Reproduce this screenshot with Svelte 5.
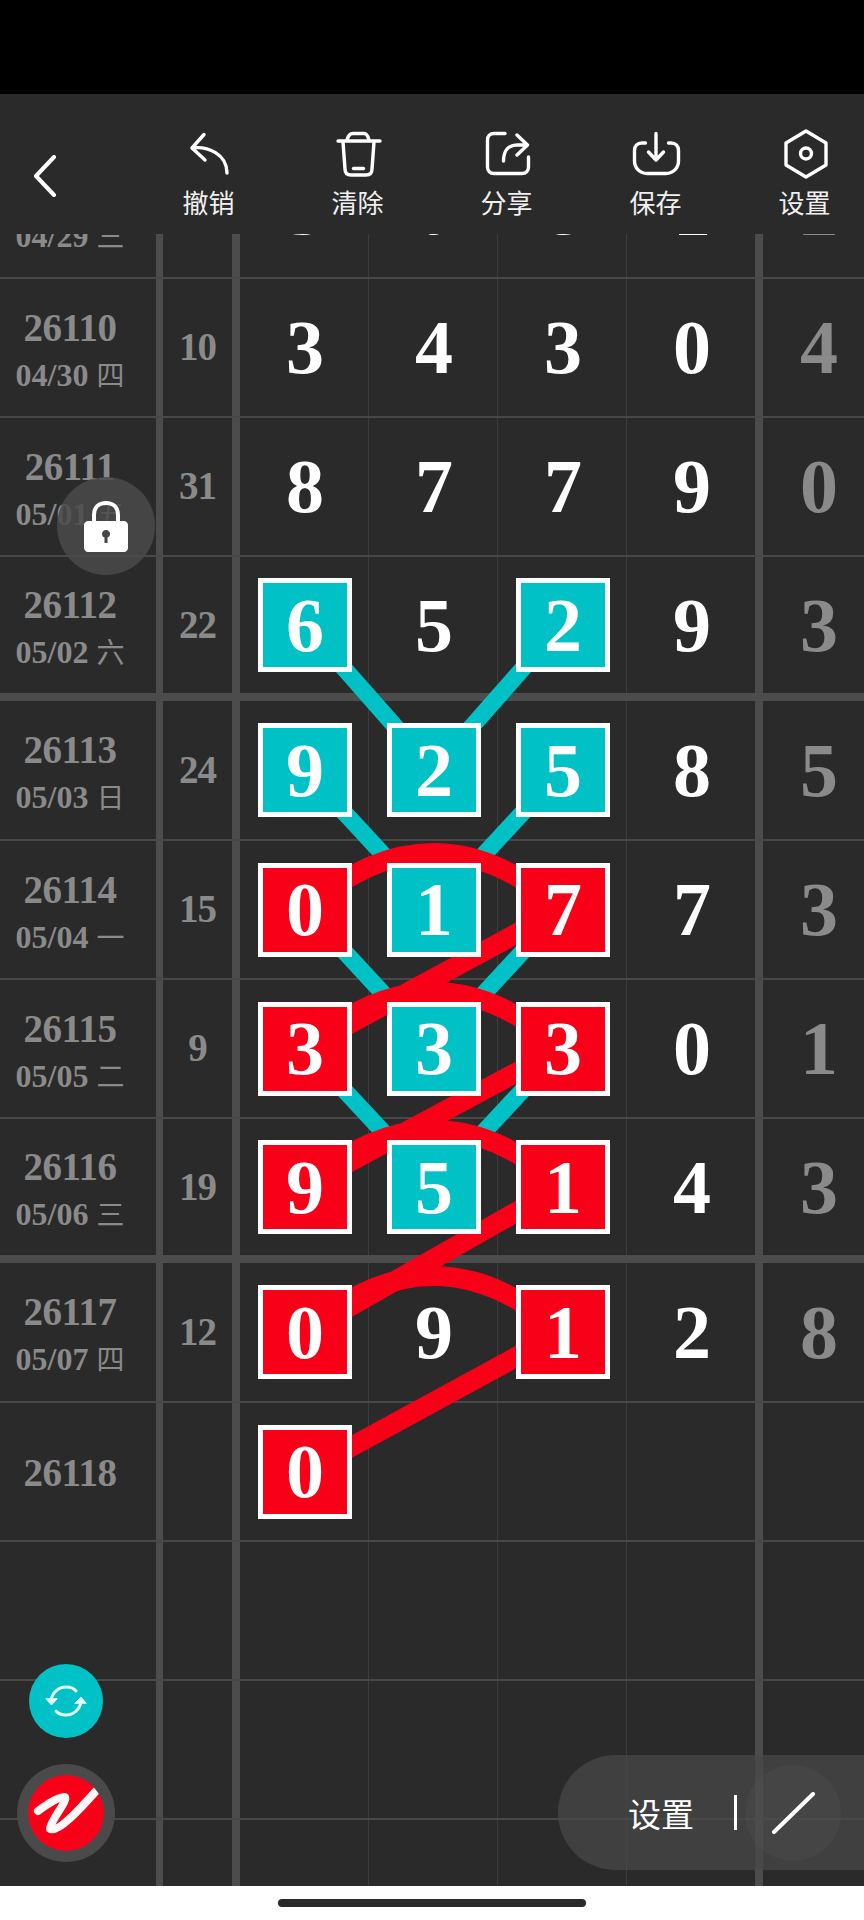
<script>
	const rows = [
		{ no: '26109', date: '04/29', week: '三', sum: '25', nums: ['3', '0', '8', '1', '2'], kind: 'normal peek' },
		{ no: '26110', date: '04/30', week: '四', sum: '10', nums: ['3', '4', '3', '0', '4'], kind: 'normal' },
		{ no: '26111', date: '05/01', week: '五', sum: '31', nums: ['8', '7', '7', '9', '0'], kind: 'normal' },
		{ no: '26112', date: '05/02', week: '六', sum: '22', nums: ['6', '5', '2', '9', '3'], kind: 'thick', marks: { 0: 'teal', 2: 'teal' } },
		{ no: '26113', date: '05/03', week: '日', sum: '24', nums: ['9', '2', '5', '8', '5'], kind: 'first', marks: { 0: 'teal', 1: 'teal', 2: 'teal' } },
		{ no: '26114', date: '05/04', week: '一', sum: '15', nums: ['0', '1', '7', '7', '3'], kind: 'normal', marks: { 0: 'red', 1: 'teal', 2: 'red' } },
		{ no: '26115', date: '05/05', week: '二', sum: '9', nums: ['3', '3', '3', '0', '1'], kind: 'normal', marks: { 0: 'red', 1: 'teal', 2: 'red' } },
		{ no: '26116', date: '05/06', week: '三', sum: '19', nums: ['9', '5', '1', '4', '3'], kind: 'thick', marks: { 0: 'red', 1: 'teal', 2: 'red' } },
		{ no: '26117', date: '05/07', week: '四', sum: '12', nums: ['0', '9', '1', '2', '8'], kind: 'first', marks: { 0: 'red', 2: 'red' } },
		{ no: '26118', date: '', week: '', sum: '', nums: ['0', '', '', '', ''], kind: 'normal', marks: { 0: 'red' } },
		{ no: '', date: '', week: '', sum: '', nums: ['', '', '', '', ''], kind: 'normal' },
		{ no: '', date: '', week: '', sum: '', nums: ['', '', '', '', ''], kind: 'normal' },
		{ no: '', date: '', week: '', sum: '', nums: ['', '', '', '', ''], kind: 'thick' },
		{ no: '', date: '', week: '', sum: '', nums: ['', '', '', '', ''], kind: 'first' }
	];

	const actions = ['撤销', '清除', '分享', '保存', '设置'];

	// centres of the marked cells, in board coordinates (board starts at y=234)
	const L = 305;
	const M = 433.5;
	const R = 562;
	const top = 234;
	const tealYs = [624, 770, 909, 1048, 1186].map((y) => y - top);
	const redYs = [909, 1048, 1186, 1332, 1472].map((y) => y - top);

	const tealPath = tealYs
		.slice(0, -1)
		.map((y, i) => `M${L} ${y}L${M} ${tealYs[i + 1]}L${R} ${y}`)
		.join('');

	const redPath = redYs
		.slice(0, -1)
		.map((y, i) => `M${L} ${y}Q${M} ${y - 112} ${R} ${y}L${L} ${redYs[i + 1]}`)
		.join('');
</script>

<div class="phone">
	<div class="status"></div>

	<header class="toolbar">
		<button class="back" aria-label="返回">
			<svg width="24" height="42" viewBox="0 0 24 42" fill="none" stroke="#fff" stroke-width="4" stroke-linecap="round" stroke-linejoin="round">
				<path d="M21 2L3 21L21 40" />
			</svg>
		</button>
		<div class="actions">
			{#each actions as label, i}
				<div class="action">
					<svg width="52" height="52" viewBox="0 0 52 52" fill="none" stroke="#fff" stroke-width="3.4" stroke-linecap="round" stroke-linejoin="round">
						{#if i === 0}
							<path d="M21 6.500L9 20L22 32M9 20C25 18 44 26 44 45" />
						{:else if i === 1}
							<path d="M6 13H48M15 12C16 8 18 5.500 21 5.500H32C35 5.500 36 8 37 12M11 14L13 41C13 45 15 47 19 47H34C38 47 40 45 40 41L42 14" />
							<path d="M21.500 40.500H31.500" />
						{:else if i === 2}
							<path d="M24 5.500H13C9 5.500 6.500 8 6.500 12V39C6.500 43 9 45.500 13 45.500H41C45 45.500 47.500 43 47.500 39V29" />
							<path d="M36 7L46.500 17L36 27M46 17H36C28 17 22.500 22 22.500 33" />
						{:else if i === 3}
							<path d="M15.500 15H12C7.500 15 4.500 18 4.500 22.500V33C4.500 40 10 45.500 17 45.500H36C43 45.500 48.500 40 48.500 33V22.500C48.500 18 45.500 15 41 15H38.500" />
							<path d="M26 5.500V32M18.500 24L26 32L33.500 24" />
						{:else}
							<path d="M27 3L47 15V37L27 49L7 37V15Z" />
							<circle cx="27" cy="25.500" r="5.500" />
						{/if}
					</svg>
					<span>{label}</span>
				</div>
			{/each}
		</div>
	</header>

	<main class="board">
		<div class="sheet">
			{#each rows as row}
				<div class="row {row.kind}">
					<div class="cell info">
						{#if row.no}<div class="no">{row.no}</div>{/if}
						{#if row.date}<div class="date">{row.date} <span class="week">{row.week}</span></div>{/if}
					</div>
					<div class="cell sum">{row.sum}</div>
					{#each row.nums as n, i}
						<div class="cell num" class:end={i === 3} class:tail={i === 4}>
							{#if row.marks && row.marks[i]}
								<span class="mark {row.marks[i]}">{n}</span>
							{:else}
								{n}
							{/if}
						</div>
					{/each}
				</div>
			{/each}
		</div>

		<svg class="links" width="864" height="1652" viewBox="0 0 864 1652" fill="none">
			<path d={tealPath} stroke="#00c2c6" stroke-width="17" />
			<path d={redPath} stroke="#f90019" stroke-width="20" />
		</svg>

		<div class="lock">
			<svg width="44" height="52" viewBox="0 0 44 52">
				<path d="M10 24V15C10 7 15 3 22 3C29 3 34 7 34 15V24" fill="none" stroke="#fff" stroke-width="4" />
				<path fill="#fff" fill-rule="evenodd" d="M4 21H40C42 21 44 23 44 25V48C44 50 42 52 40 52H4C2 52 0 50 0 48V25C0 23 2 21 4 21ZM22 30C19.500 30 18 32 18 34C18 36 19 37 20.500 37.500V43H23.500V37.500C25 37 26 36 26 34C26 32 24.500 30 22 30Z" />
			</svg>
		</div>

		<div class="sync">
			<svg width="44" height="44" viewBox="0 0 44 44" fill="none" stroke="#e6fbfb" stroke-width="3" stroke-linecap="round">
				<path d="M7 22C8 13 15 8 22 8C26 8 30 9.500 32 12" />
				<path d="M37 22C36 31 29 36 22 36C18 36 14 34.500 12 32" />
				<path d="M2 20L7.500 26L13 20Z" fill="#e6fbfb" stroke-width="1" />
				<path d="M31 24L37 18L42 24Z" fill="#e6fbfb" stroke-width="1" />
			</svg>
		</div>

		<div class="logo">
			<div class="logo-disc">
				<svg width="76" height="76" viewBox="0 0 76 76" fill="none" stroke="#fff8f8" stroke-width="8" stroke-linecap="round" stroke-linejoin="round">
					<path d="M10 36C18 30 30 22 37 22C40 26 22 46 22 54C30 58 52 34 68 16" />
				</svg>
			</div>
		</div>

		<div class="pill">
			<span class="pill-label">设置</span>
			<i class="pill-sep"></i>
			<div class="pill-tool">
				<svg width="44" height="42" viewBox="0 0 44 42" fill="none" stroke="#fff" stroke-width="4" stroke-linecap="round">
					<path d="M3 40L42 2" />
				</svg>
			</div>
		</div>
	</main>

	<footer class="nav">
		<i class="home"></i>
	</footer>
</div>

<style>
	:global(body) {
		margin: 0;
		background: #fff;
	}

	.phone {
		width: 864px;
		height: 1920px;
		display: flex;
		flex-direction: column;
		overflow: hidden;
		font-family: 'Liberation Serif', 'Noto Sans CJK SC', serif;
	}

	.status {
		height: 94px;
		background: #000;
		flex: none;
	}

	.toolbar {
		height: 140px;
		flex: none;
		background: #2a2a2a;
		display: flex;
		align-items: flex-start;
		position: relative;
		z-index: 5;
	}

	.back {
		background: none;
		border: 0;
		padding: 0;
		margin: 61px 0 0 33px;
		width: 24px;
		height: 42px;
		line-height: 0;
	}

	.actions {
		flex: 1;
		display: grid;
		grid-template-columns: repeat(5, 149px);
		padding: 34px 0 0 77px;
	}

	.action {
		display: flex;
		flex-direction: column;
		align-items: center;
		gap: 4px;
		color: #f0f0f0;
		font-family: 'Noto Sans CJK SC', sans-serif;
		font-size: 26px;
		line-height: 36px;
	}

	.board {
		flex: 1;
		min-height: 0;
		position: relative;
		overflow: hidden;
		background: #2a2a2a;
	}

	.sheet {
		margin-top: -94px;
	}

	.row {
		display: grid;
		grid-template-columns: 163px 77px 129px 129px 129px 136px 112px;
		box-sizing: border-box;
		height: 139px;
		border-bottom: 2px solid #484848;
	}

	.row.first {
		height: 140px;
	}

	.row.thick {
		height: 144px;
		border-bottom: 8px solid #4c4c4c;
	}

	/* the half-scrolled row under the toolbar, only the feet of its digits show */
	.row.peek .num.end,
	.row.peek .num.tail {
		padding-top: 1px;
	}

	.cell {
		display: flex;
		align-items: center;
		justify-content: center;
		box-sizing: border-box;
		border-right: 1px solid #3d3d3d;
	}

	.info {
		flex-direction: column;
		gap: 8px;
		padding-top: 3px;
		padding-right: 16px;
		border-right: 7px solid #4c4c4c;
		color: #8a8a8a;
		font-weight: 700;
	}

	.no {
		font-size: 39px;
		line-height: 42px;
		letter-spacing: -0.5px;
	}

	.date {
		font-size: 32px;
		line-height: 34px;
		white-space: pre;
	}

	.week {
		font-family: 'Noto Sans CJK SC', sans-serif;
		font-size: 28px;
		font-weight: 400;
	}

	.sum {
		border-right: 8px solid #4c4c4c;
		color: #8a8a8a;
		font-size: 39px;
		font-weight: 700;
		letter-spacing: -1px;
		padding-bottom: 2px;
	}

	.num {
		color: #fff;
		font-size: 76px;
		font-weight: 700;
		padding-left: 2px;
	}

	.num.end {
		border-right: 8px solid #4c4c4c;
	}

	.num.tail {
		color: #8a8a8a;
		border-right: 0;
		padding-left: 0;
	}

	.mark {
		width: 94px;
		height: 94px;
		box-sizing: border-box;
		border: 5px solid #fff;
		display: flex;
		align-items: center;
		justify-content: center;
		position: relative;
		z-index: 2;
	}

	.mark.teal {
		background: #00c2c6;
	}

	.mark.red {
		background: #f90019;
	}

	.links {
		position: absolute;
		left: 0;
		top: 0;
		z-index: 1;
	}

	.lock {
		position: absolute;
		left: 57px;
		top: 243px;
		width: 98px;
		height: 98px;
		border-radius: 50%;
		background: rgba(74, 74, 74, 0.85);
		display: flex;
		align-items: center;
		justify-content: center;
		z-index: 3;
	}

	.sync {
		position: absolute;
		left: 29px;
		top: 1430px;
		width: 74px;
		height: 74px;
		border-radius: 50%;
		background: #00c2c6;
		display: flex;
		align-items: center;
		justify-content: center;
		z-index: 3;
	}

	.logo {
		position: absolute;
		left: 17px;
		top: 1530px;
		width: 98px;
		height: 98px;
		border-radius: 50%;
		background: #4a4a4a;
		display: flex;
		align-items: center;
		justify-content: center;
		z-index: 3;
	}

	.logo-disc {
		width: 76px;
		height: 76px;
		border-radius: 50%;
		background: #f90019;
		overflow: hidden;
		line-height: 0;
	}

	.pill {
		position: absolute;
		left: 558px;
		right: 0;
		top: 1521px;
		height: 115px;
		border-radius: 58px 0 0 58px;
		background: rgba(72, 72, 72, 0.75);
		display: flex;
		align-items: center;
		z-index: 3;
	}

	.pill-label {
		margin-left: 70px;
		color: #fff;
		font-family: 'Noto Sans CJK SC', sans-serif;
		font-size: 33px;
		line-height: 40px;
	}

	.pill-sep {
		width: 3px;
		height: 35px;
		margin-left: 40px;
		background: #fff;
	}

	.pill-tool {
		width: 96px;
		height: 96px;
		margin-left: 8px;
		border-radius: 50%;
		background: rgba(90, 90, 90, 0.2);
		display: flex;
		align-items: center;
		justify-content: center;
	}

	.nav {
		height: 34px;
		flex: none;
		background: #fff;
		display: flex;
		justify-content: center;
		padding-top: 13px;
		box-sizing: border-box;
	}

	.home {
		width: 308px;
		height: 8px;
		border-radius: 4px;
		background: #2a2a2a;
	}
</style>
